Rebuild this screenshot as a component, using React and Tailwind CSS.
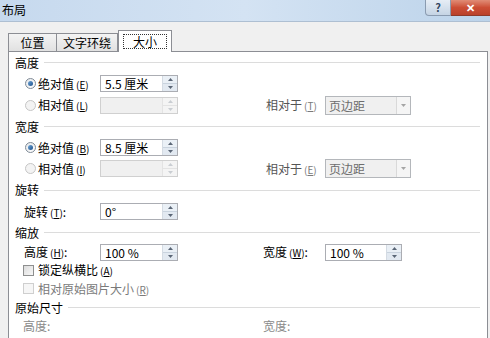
import React from "react";

function Radio({ checked, disabled }) {
  return (
    <span
      className={`w-[11px] h-[11px] rounded-full border flex items-center justify-center ${
        disabled ? "border-[#c6c6c6] bg-[#f3f3f3]" : "border-[#7f8a96] bg-gradient-to-br from-[#e4e7ea] to-[#ffffff]"
      }`}
    >
      {checked && <span className="w-[5px] h-[5px] rounded-full bg-gradient-to-br from-[#6fa6d8] to-[#1b4f8a]" />}
    </span>
  );
}

function Check({ disabled }) {
  return (
    <span
      className={`w-[11px] h-[11px] border ${
        disabled ? "border-[#cfcfcf] bg-[#f6f6f6]" : "border-[#8e8f8f] bg-gradient-to-br from-[#dcdcdc] to-[#f8f8f8]"
      }`}
    />
  );
}

function Spin({ disabled }) {
  const fill = disabled ? "#c9cdd2" : "#5a6676";
  return (
    <div className={`w-[15px] flex flex-col border-l ${disabled ? "border-[#e3e3e3]" : "border-[#d4dbe3]"}`}>
      <div className={`flex-1 flex items-center justify-center border-b ${disabled ? "bg-[#f4f4f4] border-[#e3e3e3]" : "bg-[#eaf0f6] border-[#c9d3de]"}`}>
        <svg width="5" height="3" viewBox="0 0 5 3">
          <path d="M0 3 L2.5 0 L5 3Z" fill={fill} />
        </svg>
      </div>
      <div className={`flex-1 flex items-center justify-center ${disabled ? "bg-[#f4f4f4]" : "bg-[#e2e9f1]"}`}>
        <svg width="5" height="3" viewBox="0 0 5 3">
          <path d="M0 0 L2.5 3 L5 0Z" fill={fill} />
        </svg>
      </div>
    </div>
  );
}

function SpinBox({ value, disabled, width = "w-[78px]" }) {
  return (
    <div
      className={`${width} h-[17px] flex border ${
        disabled ? "border-[#d0d0d0] bg-[#f0f0f0]" : "border-[#abadb3] bg-white"
      }`}
    >
      <div className="flex-1 pl-[4px] text-[12px] leading-[15px] text-black whitespace-pre">{value}</div>
      <Spin disabled={disabled} />
    </div>
  );
}

function Select() {
  return (
    <div className="w-[86px] h-[19px] flex border border-[#b4b7bb] bg-[#f0f0f0]">
      <div className="flex-1 pl-[3px] text-[12px] leading-[17px] text-[#6d6d6d]">页边距</div>
      <div className="w-[14px] border-l border-[#d9d9d9] bg-[#f5f5f5] flex items-center justify-center">
        <svg width="5" height="3" viewBox="0 0 5 3">
          <path d="M0 0 L2.5 3 L5 0Z" fill="#a5a5a5" />
        </svg>
      </div>
    </div>
  );
}

function Header({ text, h }) {
  return (
    <div className={`flex items-center ${h}`}>
      <span className="text-[12px] text-black">{text}</span>
      <div className="flex-1 ml-[5px] mr-[1px] border-t border-[#dcdcdc]" />
    </div>
  );
}

function Key({ k, gray }) {
  return (
    <span className={`ml-[2px] text-[10px] ${gray ? "text-[#7a7a7a]" : ""}`}>
      (<span className="underline">{k}</span>)
    </span>
  );
}

export default function App() {
  return (
    <div className="w-[490px] h-[338px] overflow-hidden bg-[#f0f0f0] font-['Noto_Sans_CJK_SC','Liberation_Sans',sans-serif] text-[12px] text-black">
      {/* title bar */}
      <div className="h-[22px] flex items-start justify-between bg-gradient-to-r from-[#c6d9ee] via-[#d4e3f3] to-[#bcd3ea] border-b border-[#aebfd2]">
        <span className="pl-[2px] pt-[2px] leading-[16px]">布局</span>
        <div className="flex">
          <div className="w-[26px] h-[16px] rounded-bl-[4px] border border-t-0 border-[#8a9bb0] bg-gradient-to-b from-[#e6edf5] to-[#c5d4e4] flex items-center justify-center text-[11px] font-bold leading-none text-[#33475f]">
            ?
          </div>
          <div className="w-[39px] h-[16px] border-b border-[#8e3a2a] bg-gradient-to-b from-[#e08c76] via-[#cc4e35] to-[#b9412b] flex items-center justify-center text-[11px] font-bold leading-none text-white">
            ✕
          </div>
        </div>
      </div>

      {/* tabs */}
      <div className="h-[29px] pt-[8px] pl-[8px] flex items-end">
        <div className="w-[49px] h-[18px] border border-b-0 border-[#8c8e94] bg-gradient-to-b from-[#f4f4f4] to-[#e1e1e1] flex items-center justify-center">
          位置
        </div>
        <div className="w-[61px] h-[18px] border border-l-0 border-b-0 border-[#8c8e94] bg-gradient-to-b from-[#f4f4f4] to-[#e1e1e1] flex items-center justify-center">
          文字环绕
        </div>
        <div className="relative z-10 -mb-px w-[54px] h-[22px] border border-b-0 border-[#8c8e94] bg-white flex items-center justify-center">
          <span className="border border-dotted border-[#333] px-[9px] leading-[13px]">大小</span>
        </div>
      </div>

      {/* panel */}
      <div className="ml-[8px] w-[480px] h-[300px] border border-b-0 border-[#8c8e94] bg-white px-[6px]">
        <Header text="高度" h="h-[21px]" />
        <div className="flex items-center h-[21px]">
          <div className="w-[85px] flex items-center pl-[10px] gap-[2px]">
            <Radio checked />
            <span>
              绝对值<Key k="E" />
            </span>
          </div>
          <SpinBox value="5.5 厘米" />
        </div>
        <div className="flex items-center h-[22px]">
          <div className="w-[85px] flex items-center pl-[10px] gap-[2px]">
            <Radio disabled />
            <span>
              相对值<Key k="L" />
            </span>
          </div>
          <SpinBox value="" disabled />
          <div className="ml-[88px] w-[59px] text-[#555]">
            相对于<Key k="T" gray />
          </div>
          <Select />
        </div>

        <Header text="宽度" h="h-[21px]" />
        <div className="flex items-center h-[21px]">
          <div className="w-[85px] flex items-center pl-[10px] gap-[2px]">
            <Radio checked />
            <span>
              绝对值<Key k="B" />
            </span>
          </div>
          <SpinBox value="8.5 厘米" />
        </div>
        <div className="flex items-center h-[21px]">
          <div className="w-[85px] flex items-center pl-[10px] gap-[2px]">
            <Radio disabled />
            <span>
              相对值<Key k="I" />
            </span>
          </div>
          <SpinBox value="" disabled />
          <div className="ml-[88px] w-[59px] text-[#555]">
            相对于<Key k="E" gray />
          </div>
          <Select />
        </div>

        <Header text="旋转" h="h-[22px]" />
        <div className="flex items-center h-[21px]">
          <div className="w-[85px] pl-[9px]">
            旋转<Key k="T" />:
          </div>
          <SpinBox value="0°" />
        </div>

        <Header text="缩放" h="h-[21px]" />
        <div className="flex items-center h-[18px]">
          <div className="w-[85px] pl-[9px]">
            高度<Key k="H" />:
          </div>
          <SpinBox value="100 %" />
          <div className="ml-[85px] w-[62px]">
            宽度<Key k="W" />:
          </div>
          <SpinBox value="100 %" width="w-[77px]" />
        </div>
        <div className="flex items-center h-[18px] pl-[8px] gap-[4px]">
          <Check />
          <span>
            锁定纵横比<Key k="A" />
          </span>
        </div>
        <div className="flex items-center h-[19px] pl-[8px] gap-[4px] text-[#7a7a7a]">
          <Check disabled />
          <span>
            相对原始图片大小<Key k="R" gray />
          </span>
        </div>

        <Header text="原始尺寸" h="h-[19px]" />
        <div className="flex items-center h-[18px] text-[#8a8a8a]">
          <div className="w-[248px] pl-[8px]">高度:</div>
          <div>宽度:</div>
        </div>
      </div>
    </div>
  );
}
